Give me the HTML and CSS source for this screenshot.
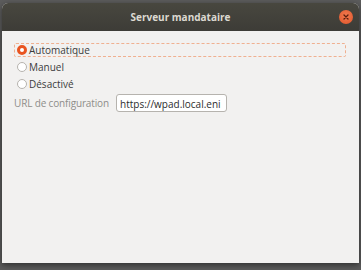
FILE: index.html
```html
<!DOCTYPE html>
<html lang="fr">
<head>
    <meta charset="UTF-8">
    <title>Serveur mandataire</title>
    <link rel="stylesheet" href="styles.css">
</head>
<body>
    <div class="window">
        <div class="titlebar">
            <span class="title">Serveur mandataire</span>
            <span class="close">
                <svg width="8" height="8" viewBox="0 0 8 8"><path d="M2 2 L6 6 M6 2 L2 6" stroke="#5a1d0c" stroke-width="1.3" stroke-linecap="round"/></svg>
            </span>
        </div>
        <div class="content">
            <label class="option focused"><span class="radio checked"></span>Automatique</label>
            <label class="option"><span class="radio"></span>Manuel</label>
            <label class="option"><span class="radio"></span>Désactivé</label>
            <div class="url-row">
                <span class="url-label">URL de configuration</span>
                <span class="entry">https://wpad.local.eni</span>
            </div>
        </div>
    </div>
</body>
</html>
```

FILE: styles.css
```css
* {
    margin: 0;
    padding: 0;
    box-sizing: border-box;
}

body {
    font-family: 'Open Sans', 'DejaVu Sans', sans-serif;
    background: #5c5c5c;
    width: 361px;
    height: 270px;
    padding: 3px 2px 0 2px;
    overflow: hidden;
}

.window {
    height: 260px;
    border-radius: 6px 6px 0 0;
    overflow: hidden;
    background: #f2f1f0;
    box-shadow: 0 2px 6px rgba(0, 0, 0, 0.5);
}

.titlebar {
    height: 28px;
    background: linear-gradient(#48473f, #3d3c37);
    display: flex;
    align-items: center;
    justify-content: center;
    position: relative;
}

.title {
    color: #dcd9d1;
    font-weight: bold;
    font-size: 10px;
}

.close {
    position: absolute;
    right: 6px;
    top: 7px;
    width: 14px;
    height: 14px;
    border-radius: 50%;
    background: radial-gradient(circle at 50% 40%, #f27a4f, #e0552a);
    display: flex;
    align-items: center;
    justify-content: center;
}

.content {
    padding: 12px 13px 0 12px;
    display: flex;
    flex-direction: column;
    font-size: 10px;
    color: #3c3c3c;
}

.option {
    display: flex;
    align-items: center;
    height: 14px;
    margin-bottom: 3px;
    padding-left: 3px;
}

.option.focused {
    border: 1px dashed #f0b090;
    border-radius: 2px;
    padding-left: 2px;
}

.radio {
    width: 10px;
    height: 10px;
    border-radius: 50%;
    border: 1px solid #b6b3ae;
    background: #ffffff;
    margin-right: 2px;
}

.radio.checked {
    border: 3px solid #e95420;
}

.url-row {
    display: flex;
    align-items: center;
}

.url-label {
    color: #8e8d8a;
    width: 102px;
    letter-spacing: -0.15px;
    white-space: nowrap;
}

.entry {
    border: 1px solid #b6b3ae;
    border-radius: 3px;
    background: #ffffff;
    padding: 2px 3px;
    width: 111px;
    height: 18px;
    white-space: nowrap;
    overflow: hidden;
    color: #2c2c2c;
}
```
